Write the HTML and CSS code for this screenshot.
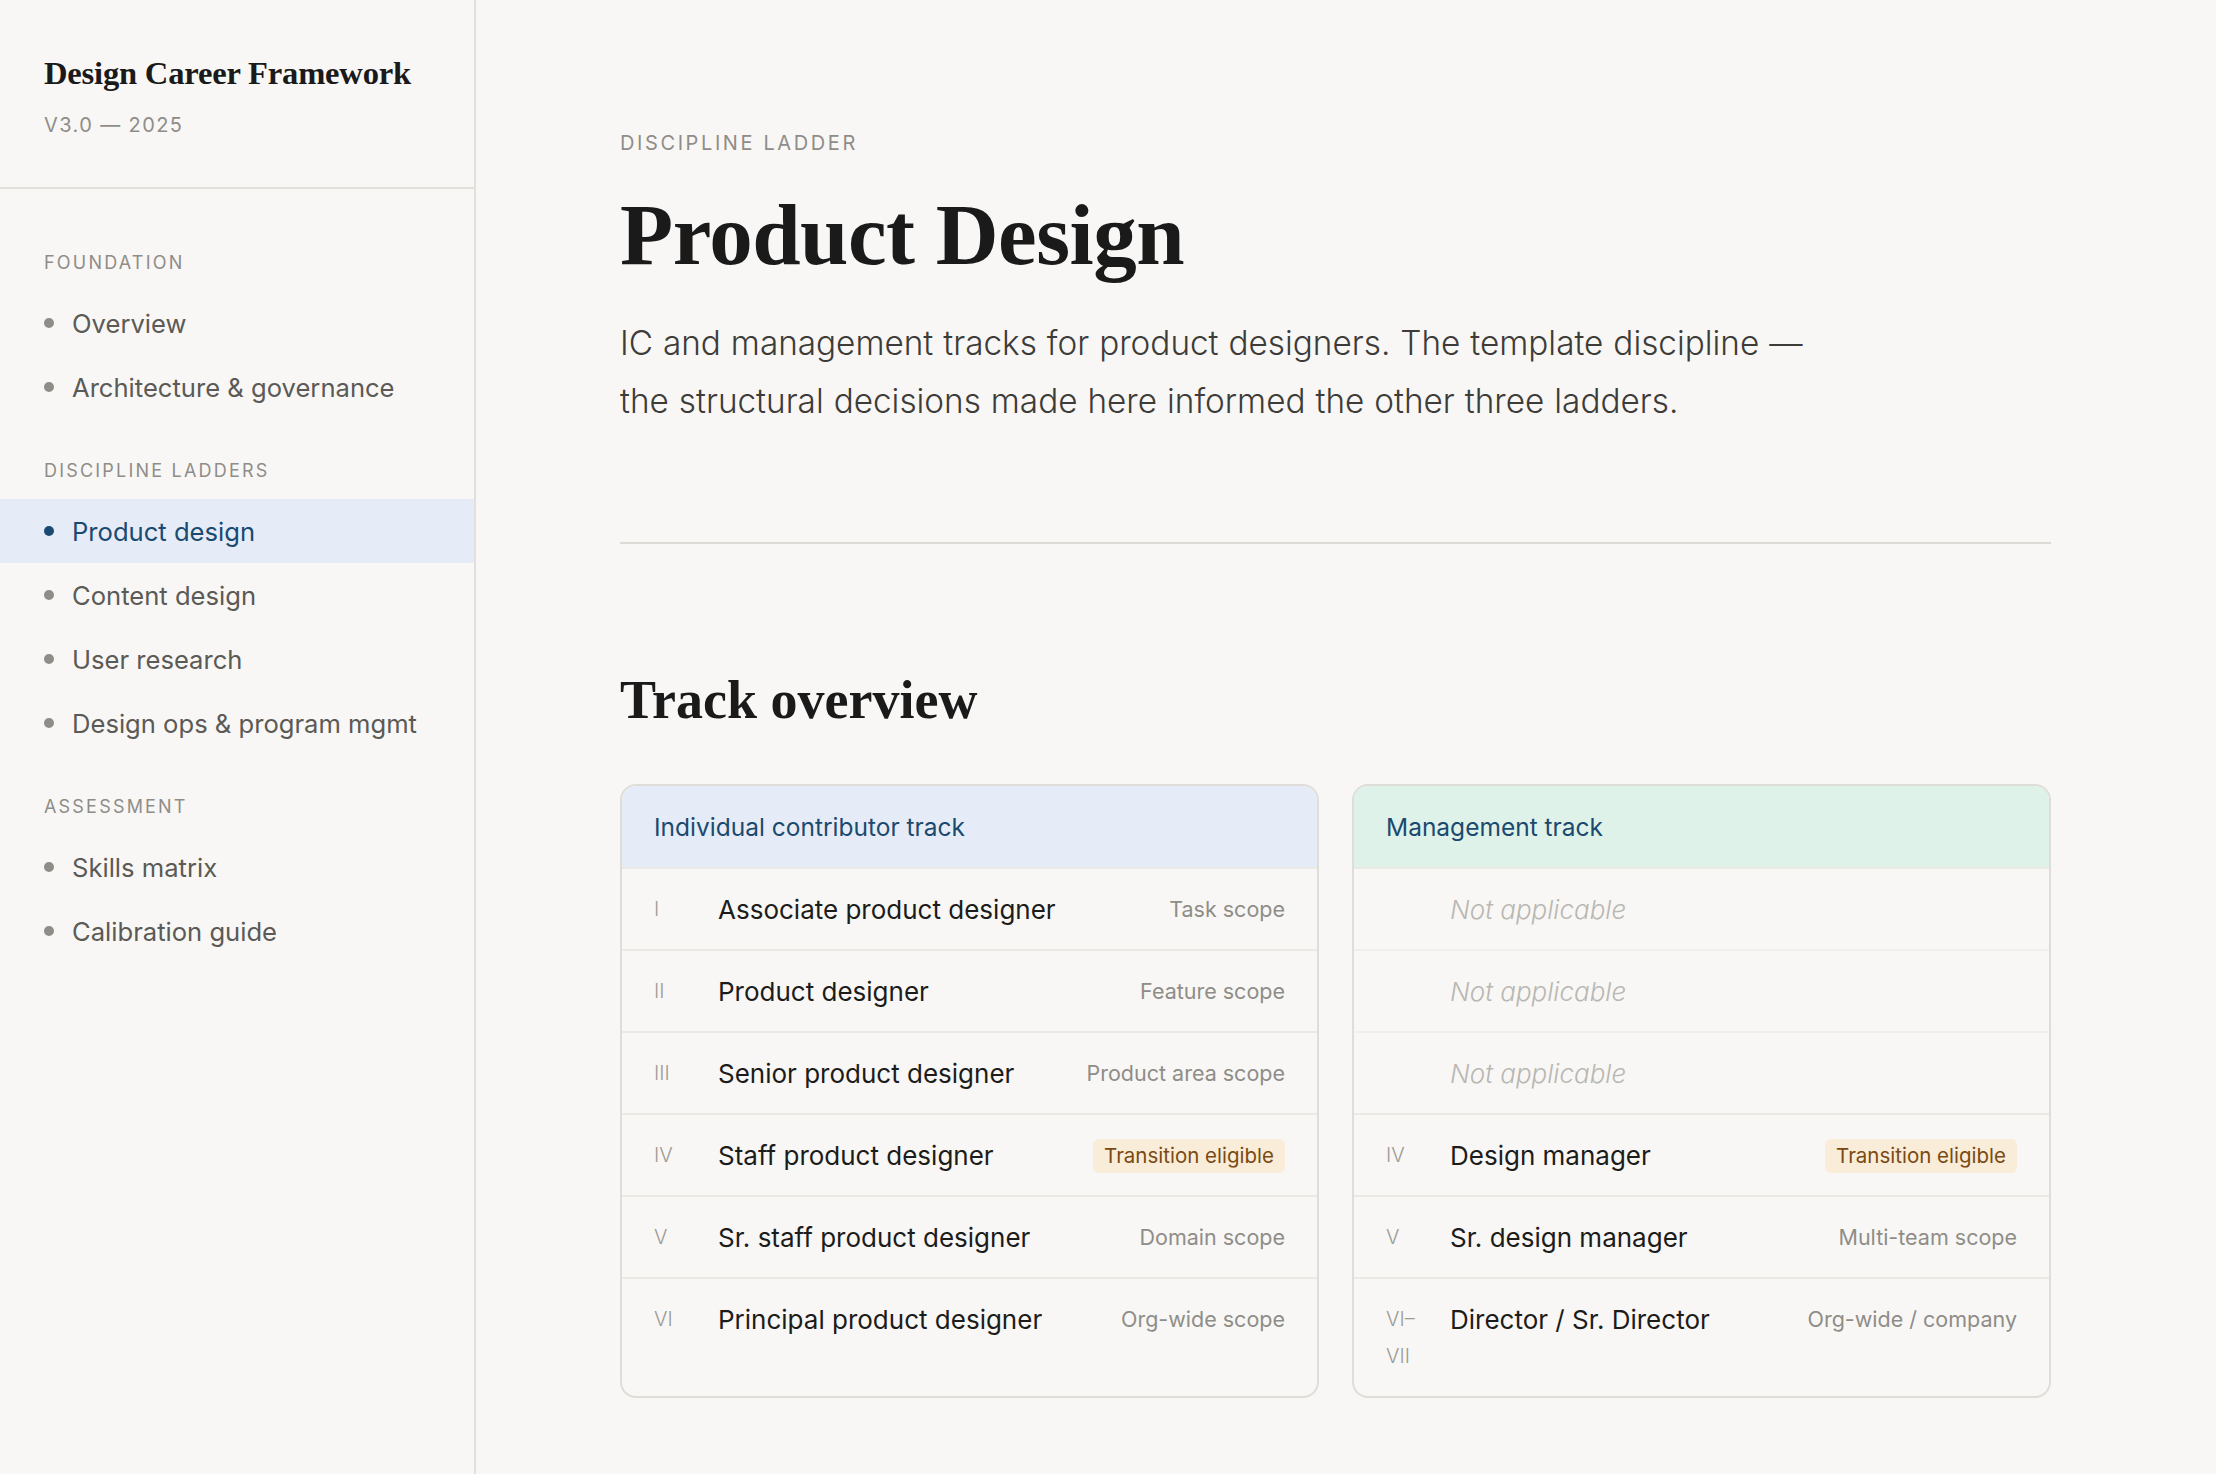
FILE: index.html
```html
<!DOCTYPE html>
<html lang="en">
<head>
<meta charset="utf-8">
<title>Product Design — Design Career Framework</title>
<link rel="stylesheet" href="styles.css">
</head>
<body>
<aside class="sidebar">
  <div class="brand">
    <div class="brand-title">Design Career Framework</div>
    <div class="brand-version">V3.0 — 2025</div>
  </div>
  <nav class="nav">
    <div class="nav-section">
      <div class="nav-label">Foundation</div>
      <ul class="nav-list">
        <li class="nav-item"><span class="dot"></span>Overview</li>
        <li class="nav-item"><span class="dot"></span>Architecture &amp; governance</li>
      </ul>
    </div>
    <div class="nav-section">
      <div class="nav-label">Discipline ladders</div>
      <ul class="nav-list">
        <li class="nav-item active"><span class="dot"></span>Product design</li>
        <li class="nav-item"><span class="dot"></span>Content design</li>
        <li class="nav-item"><span class="dot"></span>User research</li>
        <li class="nav-item"><span class="dot"></span>Design ops &amp; program mgmt</li>
      </ul>
    </div>
    <div class="nav-section">
      <div class="nav-label">Assessment</div>
      <ul class="nav-list">
        <li class="nav-item"><span class="dot"></span>Skills matrix</li>
        <li class="nav-item"><span class="dot"></span>Calibration guide</li>
      </ul>
    </div>
  </nav>
</aside>
<main class="main">
  <div class="content">
    <header class="page-header">
      <div class="eyebrow">Discipline ladder</div>
      <h1 class="page-title">Product Design</h1>
      <p class="lede">IC and management tracks for product designers. The template discipline — the structural decisions made here informed the other three ladders.</p>
    </header>
    <section class="tracks">
      <h2 class="section-title">Track overview</h2>
      <div class="track-grid">
        <div class="card">
          <div class="card-head ic">Individual contributor track</div>
          <div class="row"><span class="num">I</span><span class="role">Associate product designer</span><span class="scope">Task scope</span></div>
          <div class="row"><span class="num">II</span><span class="role">Product designer</span><span class="scope">Feature scope</span></div>
          <div class="row"><span class="num">III</span><span class="role">Senior product designer</span><span class="scope">Product area scope</span></div>
          <div class="row"><span class="num">IV</span><span class="role">Staff product designer</span><span class="badge">Transition eligible</span></div>
          <div class="row"><span class="num">V</span><span class="role">Sr. staff product designer</span><span class="scope">Domain scope</span></div>
          <div class="row"><span class="num">VI</span><span class="role">Principal product designer</span><span class="scope">Org-wide scope</span></div>
        </div>
        <div class="card">
          <div class="card-head mgmt">Management track</div>
          <div class="row na"><span class="num"></span><span class="role muted">Not applicable</span></div>
          <div class="row na"><span class="num"></span><span class="role muted">Not applicable</span></div>
          <div class="row na"><span class="num"></span><span class="role muted">Not applicable</span></div>
          <div class="row"><span class="num">IV</span><span class="role">Design manager</span><span class="badge">Transition eligible</span></div>
          <div class="row"><span class="num">V</span><span class="role">Sr. design manager</span><span class="scope">Multi-team scope</span></div>
          <div class="row"><span class="num">VI–VII</span><span class="role">Director / Sr. Director</span><span class="scope">Org-wide / company</span></div>
        </div>
      </div>
    </section>
  </div>
</main>
</body>
</html>
```

FILE: styles.css
```css
* { box-sizing: border-box; }

html, body {
  margin: 0;
  padding: 0;
  background: #f8f7f5;
}

body {
  display: flex;
  min-height: 100vh;
  font-family: Inter, "DejaVu Sans", sans-serif;
  color: #1c1c1a;
}

/* Sidebar */
.sidebar {
  width: 476px;
  flex: 0 0 476px;
  border-right: 2px solid #e2e0db;
  min-height: 100vh;
}

.brand {
  padding: 53px 44px 48px;
  border-bottom: 2px solid #e2e0db;
}

.brand-title {
  font-family: "Liberation Serif", "Times New Roman", serif;
  font-weight: 700;
  font-size: 32.6px;
  line-height: 40px;
  color: #1a1a1a;
  letter-spacing: -0.2px;
}

.brand-version {
  margin-top: 18px;
  font-size: 20px;
  line-height: 28px;
  color: #8f8d88;
  letter-spacing: 1.4px;
}

.nav {
  padding-top: 62px;
}

.nav-section + .nav-section {
  margin-top: 40px;
}

.nav-label {
  padding: 0 44px;
  font-size: 18px;
  line-height: 24px;
  letter-spacing: 2.2px;
  text-transform: uppercase;
  color: #8f8d88;
  margin-bottom: 16px;
}

.nav-list {
  list-style: none;
  margin: 0;
  padding: 0;
}

.nav-item {
  display: flex;
  align-items: center;
  gap: 18px;
  height: 64px;
  padding: 0 44px;
  font-size: 25.6px;
  color: #5b5a56;
}

.dot {
  width: 10px;
  height: 10px;
  border-radius: 50%;
  background: #8f8d88;
  flex: 0 0 10px;
}

.nav-item.active {
  background: #e5ecf7;
  color: #1a4a72;
}

.nav-item.active .dot {
  background: #1a4a72;
}

/* Main */
.main {
  flex: 1;
  padding: 129px 165px 0 144px;
}

.content {
  max-width: 1431px;
}

.page-header {
  padding-bottom: 112px;
  border-bottom: 2px solid #dcdad4;
}

.eyebrow {
  font-size: 20px;
  line-height: 28px;
  letter-spacing: 2.6px;
  text-transform: uppercase;
  color: #8f8d88;
}

.page-title {
  margin: 31px 0 0;
  font-family: "Liberation Serif", "Times New Roman", serif;
  font-weight: 700;
  font-size: 87px;
  line-height: 1.08;
  color: #1a1a1a;
  letter-spacing: -0.5px;
}

.lede {
  margin: 32px 0 0;
  max-width: 1200px;
  font-size: 33.3px;
  font-weight: 300;
  line-height: 58px;
  color: #3d3c39;
  word-spacing: 0.6px;
}

.section-title {
  margin: 124px 0 0;
  font-family: "Liberation Serif", "Times New Roman", serif;
  font-weight: 700;
  font-size: 54px;
  line-height: 1.2;
  color: #1a1a1a;
}

.track-grid {
  margin-top: 51px;
  display: grid;
  grid-template-columns: 1fr 1fr;
  gap: 33px;
}

.card {
  border: 2px solid #dfddd7;
  border-radius: 16px;
  overflow: hidden;
  display: flex;
  flex-direction: column;
}

.card-head {
  padding: 24px 32px 23px;
  font-size: 24.5px;
  line-height: 34px;
  color: #1b4a6e;
}

.card-head.ic { background: #e6ecf7; }
.card-head.mgmt { background: #dff2ea; }

.row {
  display: flex;
  align-items: flex-start;
  padding: 23px 32px 22px;
  border-top: 2px solid #ebe9e4;
}

.row.na {
  border-top-color: #f1efeb;
}

.card-head + .row {
  border-top-color: #ebe9e4;
}

.num {
  flex: 0 0 44px;
  width: 44px;
  margin: -1px 20px -1px 0;
  font-size: 20px;
  font-weight: 300;
  line-height: 37px;
  color: #9d9b96;
}

.role {
  flex: 1;
  font-size: 26px;
  line-height: 35px;
  color: #1c1c1a;
}

.role.muted {
  font-style: italic;
  font-weight: 300;
  color: #b9b7b2;
}

.scope {
  font-size: 21.5px;
  line-height: 35px;
  color: #8f8d88;
  white-space: nowrap;
}

.badge {
  display: inline-block;
  margin-top: 1px;
  padding: 0 11px;
  height: 34px;
  line-height: 34px;
  font-size: 20.5px;
  border-radius: 6px;
  background: #f9ecd8;
  color: #7b4a12;
  white-space: nowrap;
}
```
